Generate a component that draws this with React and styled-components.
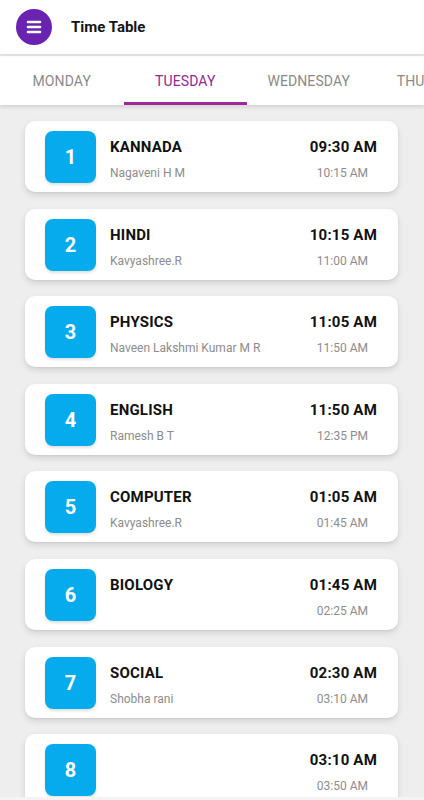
import React from 'react';
import styled, { createGlobalStyle } from 'styled-components';

const GlobalStyle = createGlobalStyle`
  html, body {
    margin: 0;
    padding: 0;
    background: #eeeeee;
    font-family: Roboto, "Noto Sans", Arial, sans-serif;
  }
`;

const Screen = styled.div`
  width: 424px;
  height: 800px;
  display: flex;
  flex-direction: column;
  overflow: hidden;
  background: #eeeeee;
`;

const Header = styled.header`
  height: 54px;
  flex-shrink: 0;
  display: flex;
  align-items: center;
  gap: 19px;
  padding: 0 0 0 16px;
  background: #fff;
  position: relative;
  z-index: 3;
  box-shadow: 0 1px 3px rgba(0, 0, 0, 0.1);
`;

const MenuButton = styled.div`
  width: 36px;
  height: 36px;
  border-radius: 50%;
  background: #6a22b0;
  display: flex;
  align-items: center;
  justify-content: center;
`;

const Title = styled.h1`
  margin: 0;
  font-size: 15px;
  font-weight: 700;
  color: #141414;
`;

const TabBar = styled.nav`
  margin-top: 2px;
  height: 49px;
  flex-shrink: 0;
  display: flex;
  background: #fff;
  position: relative;
  z-index: 2;
  box-shadow: 0 2px 4px rgba(0, 0, 0, 0.12);
`;

const Tab = styled.div`
  flex: 0 0 123.5px;
  display: flex;
  align-items: center;
  justify-content: center;
  position: relative;
  font-size: 14px;
  letter-spacing: 0.1px;
  color: ${p => (p.$active ? '#8e2a91' : '#8a8a8a')};
  white-space: nowrap;

  &::after {
    content: '';
    display: ${p => (p.$active ? 'block' : 'none')};
    position: absolute;
    left: 0;
    right: 0;
    bottom: 0;
    height: 3px;
    background: #9b2b9d;
  }
`;

const List = styled.main`
  flex: 1;
  min-height: 0;
  display: flex;
  flex-direction: column;
  gap: 16.6px;
  padding: 16px 26px 0 25px;
  overflow: hidden;
`;

const Card = styled.div`
  flex-shrink: 0;
  height: 71px;
  display: flex;
  align-items: center;
  padding: 0 21px 0 20px;
  background: #fff;
  border-radius: 10px;
  box-shadow: 0 3px 6px rgba(0, 0, 0, 0.12), 0 1px 2px rgba(0, 0, 0, 0.05);
`;

const NumberBox = styled.div`
  width: 51px;
  height: 52px;
  margin-top: 1px;
  flex-shrink: 0;
  border-radius: 8px;
  background: #05abec;
  color: #fff;
  font-size: 20px;
  font-weight: 700;
  display: flex;
  align-items: center;
  justify-content: center;
  box-shadow: 0 2px 3px rgba(0, 0, 0, 0.12);
`;

const Info = styled.div`
  flex: 1;
  min-width: 0;
  display: flex;
  flex-direction: column;
  padding: 5px 0 0 14px;
`;

const Times = styled.div`
  display: flex;
  flex-direction: column;
  align-items: flex-end;
  padding-top: 5px;
`;

const Primary = styled.div`
  height: 20px;
  line-height: 20px;
  font-size: 15px;
  font-weight: 700;
  color: #111;
  letter-spacing: 0.2px;
`;

const Secondary = styled.div`
  height: 16px;
  line-height: 16px;
  margin-top: 8px;
  font-size: 12px;
  color: #8c8c8c;
  padding-right: ${p => p.$inset || 0}px;
`;

const BottomEdge = styled.div`
  height: 3px;
  flex-shrink: 0;
  background: #f4f4f4;
`;

const Hamburger = () => (
  <svg width="16" height="14" viewBox="0 0 16 14">
    <g stroke="#fff" strokeWidth="2.6" strokeLinecap="round">
      <line x1="2" y1="2" x2="14" y2="2" />
      <line x1="2" y1="7" x2="14" y2="7" />
      <line x1="2" y1="12" x2="14" y2="12" />
    </g>
  </svg>
);

const days = ['MONDAY', 'TUESDAY', 'WEDNESDAY', 'THURSDAY'];

const periods = [
  { subject: 'KANNADA', teacher: 'Nagaveni H M', start: '09:30 AM', end: '10:15 AM' },
  { subject: 'HINDI', teacher: 'Kavyashree.R', start: '10:15 AM', end: '11:00 AM' },
  { subject: 'PHYSICS', teacher: 'Naveen Lakshmi Kumar M R', start: '11:05 AM', end: '11:50 AM' },
  { subject: 'ENGLISH', teacher: 'Ramesh B T', start: '11:50 AM', end: '12:35 PM' },
  { subject: 'COMPUTER', teacher: 'Kavyashree.R', start: '01:05 AM', end: '01:45 AM' },
  { subject: 'BIOLOGY', teacher: '', start: '01:45 AM', end: '02:25 AM' },
  { subject: 'SOCIAL', teacher: 'Shobha rani', start: '02:30 AM', end: '03:10 AM' },
  { subject: '', teacher: '', start: '03:10 AM', end: '03:50 AM' },
];

export default function App() {
  return (
    <Screen>
      <GlobalStyle />
      <Header>
        <MenuButton>
          <Hamburger />
        </MenuButton>
        <Title>Time Table</Title>
      </Header>
      <TabBar>
        {days.map(d => (
          <Tab key={d} $active={d === 'TUESDAY'}>{d}</Tab>
        ))}
      </TabBar>
      <List>
        {periods.map((p, i) => (
          <Card key={i}>
            <NumberBox>{i + 1}</NumberBox>
            <Info>
              <Primary>{p.subject}</Primary>
              <Secondary>{p.teacher}</Secondary>
            </Info>
            <Times>
              <Primary>{p.start}</Primary>
              <Secondary $inset={9}>{p.end}</Secondary>
            </Times>
          </Card>
        ))}
      </List>
      <BottomEdge />
    </Screen>
  );
}
